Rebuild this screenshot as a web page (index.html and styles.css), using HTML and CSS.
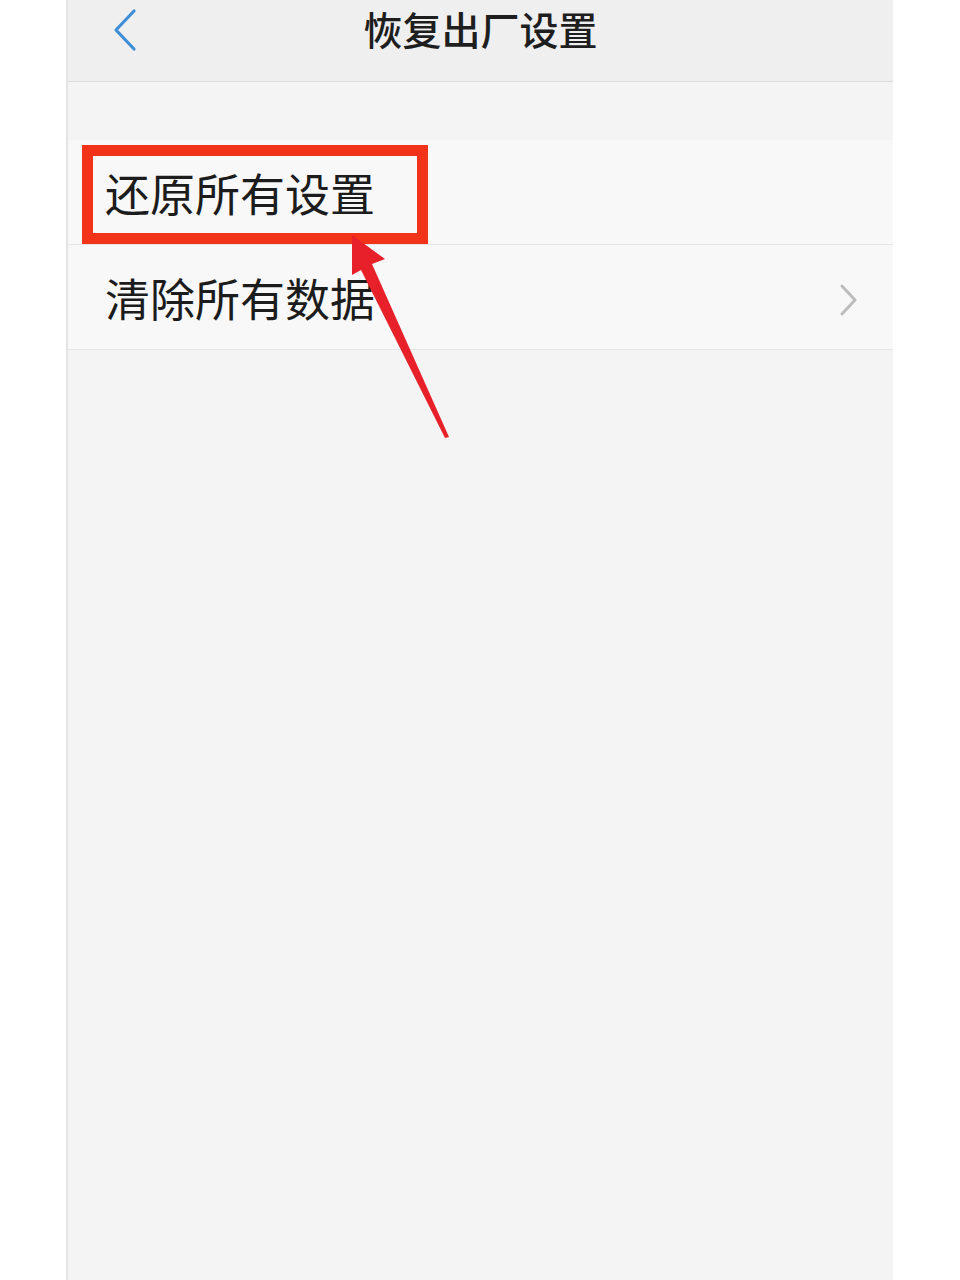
FILE: index.html
```html
<!DOCTYPE html>
<html lang="zh-CN">
<head>
<meta charset="utf-8">
<title>恢复出厂设置</title>
<link rel="stylesheet" href="styles.css">
</head>
<body>
<div class="phone">
  <header class="topbar">
    <svg class="back" width="26" height="44" viewBox="0 0 26 44" aria-hidden="true">
      <polyline points="22,3 4,22 22,41" fill="none" stroke="#3f8fd8" stroke-width="3.2" stroke-linecap="round" stroke-linejoin="round"/>
    </svg>
    <h1 class="title">恢复出厂设置</h1>
  </header>
  <div class="spacer"></div>
  <ul class="list">
    <li class="row"><span class="label">还原所有设置</span></li>
    <li class="row"><span class="label">清除所有数据</span>
      <svg class="chev" width="20" height="32" viewBox="0 0 20 32" aria-hidden="true">
        <polyline points="3,2 16,16 3,30" fill="none" stroke="#bdbdbd" stroke-width="3" stroke-linecap="round" stroke-linejoin="round"/>
      </svg>
    </li>
  </ul>
</div>
<div class="highlight"></div>
<svg class="arrow" width="960" height="1280" viewBox="0 0 960 1280" aria-hidden="true">
  <polygon points="352,235 385,259 372,264 449,437 445,438 361,270 352,275" fill="#e8202a"/>
</svg>
</body>
</html>
```
FILE: styles.css
```css
html, body {
  margin: 0;
  padding: 0;
  background: #ffffff;
}
body {
  width: 960px;
  height: 1280px;
  overflow: hidden;
  position: relative;
  font-family: "Noto Sans CJK SC", "Noto Sans", sans-serif;
}
.phone {
  margin-left: 66px;
  width: 825px;
  height: 1280px;
  border-left: 2px solid #e4e4e4;
  background: #f4f4f4;
  display: flex;
  flex-direction: column;
}
.topbar {
  height: 81px;
  background: #efefef;
  border-bottom: 1px solid #dcdcdc;
  display: flex;
  align-items: center;
  justify-content: center;
  position: relative;
  box-sizing: content-box;
}
.back {
  position: absolute;
  left: 44px;
  top: 8px;
}
.title {
  margin: 0;
  font-size: 39px;
  font-weight: 500;
  color: #1e1e1e;
  line-height: 1;
  margin-top: -24px;
}
.spacer {
  height: 58px;
}
.list {
  list-style: none;
  margin: 0;
  padding: 0;
}
.row {
  height: 104px;
  background: #f8f8f8;
  border-bottom: 1px solid #e6e6e6;
  display: flex;
  align-items: center;
  justify-content: space-between;
  padding: 0 34px 0 37px;
}
.label {
  font-size: 45px;
  color: #1c1c1c;
  line-height: 1;
}
.chev {
  display: block;
  margin-top: 6px;
}
.highlight {
  position: absolute;
  left: 82px;
  top: 145px;
  width: 324px;
  height: 77px;
  border: 11px solid #f2331a;
}
.arrow {
  position: absolute;
  left: 0;
  top: 0;
  pointer-events: none;
}
```
